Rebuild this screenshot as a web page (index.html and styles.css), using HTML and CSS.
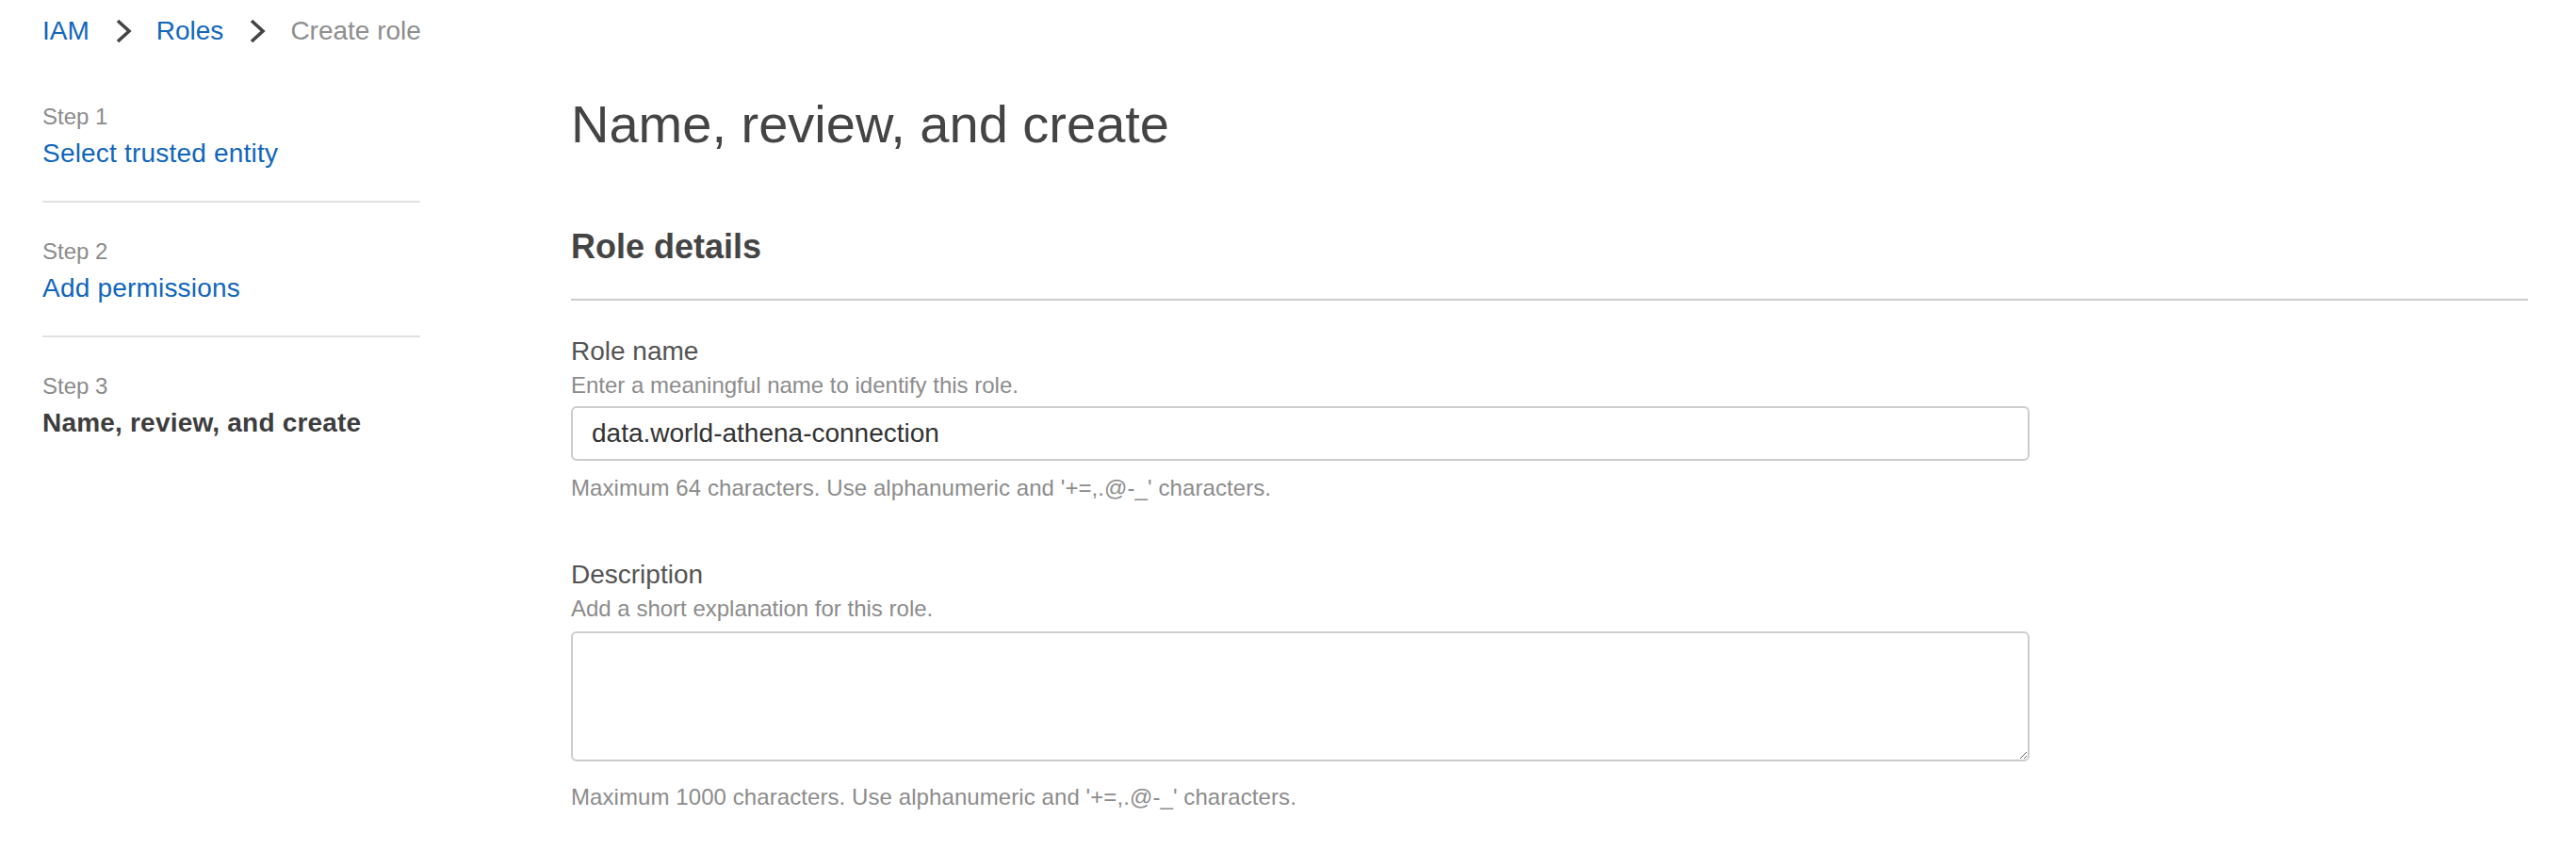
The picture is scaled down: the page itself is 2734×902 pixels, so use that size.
FILE: index.html
```html
<!DOCTYPE html>
<html lang="en">
<head>
<meta charset="utf-8">
<title>Create role</title>
<link rel="stylesheet" href="styles.css">
</head>
<body>
<div class="page">
  <nav class="breadcrumb">
    <a class="crumb-link" href="#">IAM</a>
    <svg class="chev" width="20" height="28" viewBox="0 0 20 28"><polyline points="4,3 16,14 4,25" fill="none" stroke="#444" stroke-width="3.6"/></svg>
    <a class="crumb-link" href="#">Roles</a>
    <svg class="chev" width="20" height="28" viewBox="0 0 20 28"><polyline points="4,3 16,14 4,25" fill="none" stroke="#444" stroke-width="3.6"/></svg>
    <span class="crumb-current">Create role</span>
  </nav>
  <div class="layout">
    <aside class="steps">
      <div class="step">
        <div class="step-num">Step 1</div>
        <a class="step-title step-link" href="#">Select trusted entity</a>
      </div>
      <div class="step">
        <div class="step-num">Step 2</div>
        <a class="step-title step-link" href="#">Add permissions</a>
      </div>
      <div class="step step-last">
        <div class="step-num">Step 3</div>
        <div class="step-title step-current">Name, review, and create</div>
      </div>
    </aside>
    <main class="content">
      <h1 class="page-title">Name, review, and create</h1>
      <section class="panel">
        <h2 class="panel-title">Role details</h2>
        <div class="field field-first">
          <div class="field-label">Role name</div>
          <div class="field-hint">Enter a meaningful name to identify this role.</div>
          <input class="text-input" type="text" value="data.world-athena-connection">
          <div class="field-help">Maximum 64 characters. Use alphanumeric and '+=,.@-_' characters.</div>
        </div>
        <div class="field field-second">
          <div class="field-label">Description</div>
          <div class="field-hint">Add a short explanation for this role.</div>
          <textarea class="text-area"></textarea>
          <div class="field-help field-help-area">Maximum 1000 characters. Use alphanumeric and '+=,.@-_' characters.</div>
        </div>
      </section>
    </main>
  </div>
</div>
</body>
</html>
```
FILE: styles.css
```css
* { box-sizing: border-box; }
html, body { margin: 0; padding: 0; background: #ffffff; }
body {
  font-family: "Liberation Sans", Arial, Helvetica, sans-serif;
  color: #444444;
}
.page {
  padding: 13px 51px 0 45px;
}
.breadcrumb {
  display: flex;
  align-items: center;
  height: 40px;
  font-size: 28px;
  line-height: 40px;
}
.crumb-link {
  color: #1166bb;
  text-decoration: none;
}
.chev {
  display: block;
  margin: 0 25px 0 26px;
}
.crumb-current {
  color: #8e8e8e;
}
.layout {
  display: flex;
  gap: 160px;
  margin-top: 19px;
}
.steps {
  width: 401px;
  flex: none;
}
.step {
  padding: 36px 0 30px;
  border-bottom: 2px solid #e1e1e1;
}
.step-last {
  border-bottom: none;
}
.step-num {
  font-size: 24px;
  line-height: 32px;
  color: #8b8b8b;
}
.step-title {
  display: block;
  margin-top: 3px;
  font-size: 28px;
  line-height: 40px;
  letter-spacing: 0.2px;
}
.step-link {
  color: #1166bb;
  text-decoration: none;
}
.step-current {
  font-weight: bold;
  color: #3d3d3d;
}
.content {
  flex: 1;
  min-width: 0;
}
.page-title {
  margin: 28px 0 0;
  font-size: 56px;
  line-height: 64px;
  font-weight: normal;
  color: #444444;
}
.panel-title {
  margin: 76px 0 0;
  padding-bottom: 33px;
  border-bottom: 2px solid #cccccc;
  font-size: 36px;
  line-height: 44px;
  font-weight: bold;
  color: #444444;
}
.field-first {
  padding-top: 36px;
}
.field-second {
  margin-top: 58px;
}
.field-label {
  font-size: 28px;
  line-height: 36px;
  color: #545454;
}
.field-hint {
  margin-top: 2px;
  font-size: 24px;
  line-height: 32px;
  color: #8c8c8c;
}
.text-input {
  display: block;
  width: 1548px;
  height: 58px;
  margin-top: 6px;
  padding: 0 20px;
  border: 2px solid #cccccc;
  border-radius: 6px;
  font-family: "Liberation Sans", Arial, Helvetica, sans-serif;
  font-size: 28px;
  color: #333333;
  background: #ffffff;
  outline: none;
}
.text-area {
  display: block;
  width: 1548px;
  height: 138px;
  margin-top: 8px;
  padding: 10px 19px;
  border: 2px solid #cccccc;
  border-radius: 6px;
  font-family: "Liberation Sans", Arial, Helvetica, sans-serif;
  font-size: 28px;
  color: #333333;
  background: #ffffff;
  outline: none;
}
.field-help {
  margin-top: 13px;
  font-size: 24px;
  line-height: 32px;
  color: #8c8c8c;
  letter-spacing: 0.08px;
}
.field-help-area {
  margin-top: 22px;
}
```
